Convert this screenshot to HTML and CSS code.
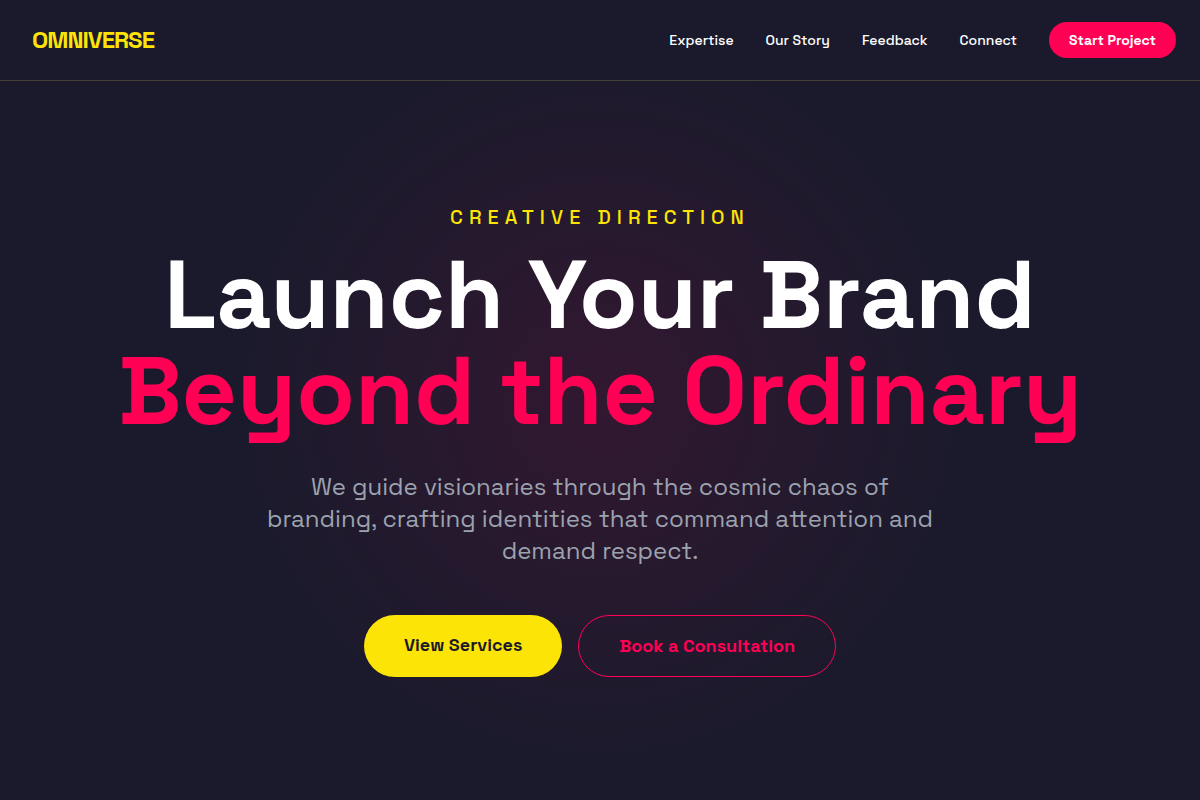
FILE: index.html
```html
<!DOCTYPE html>
<html lang="en">
<head>
    <meta charset="UTF-8">
    <meta name="viewport" content="width=device-width, initial-scale=1.0">
    <title>Omniverse</title>
    <link rel="stylesheet" href="styles.css">
</head>
<body>
    <header class="site-header">
        <a href="#home" class="logo">OMNIVERSE</a>
        <nav class="site-nav">
            <a href="#expertise">Expertise</a>
            <a href="#story">Our Story</a>
            <a href="#feedback">Feedback</a>
            <a href="#connect">Connect</a>
            <button type="button" class="nav-button">Start Project</button>
        </nav>
    </header>
    <main class="hero" id="home">
        <p class="eyebrow">CREATIVE DIRECTION</p>
        <h1>Launch Your Brand <span class="accent">Beyond the Ordinary</span></h1>
        <p class="intro">We guide visionaries through the cosmic chaos of branding, crafting identities that command attention and demand respect.</p>
        <div class="actions">
            <button type="button" class="button button-primary">View Services</button>
            <button type="button" class="button button-outline">Book a Consultation</button>
        </div>
    </main>
</body>
</html>
```
FILE: styles.css
```css
* {
    margin: 0;
    padding: 0;
    box-sizing: border-box;
}

body {
    display: flex;
    flex-direction: column;
    min-height: 100vh;
    background: #1b1a2c radial-gradient(circle 360px at center, rgba(255, 0, 85, 0.1), transparent);
    color: #fff;
    font-family: 'Space Grotesk', Inter, sans-serif;
}

a {
    color: inherit;
    text-decoration: none;
}

button {
    border: none;
    border-radius: 32px;
    font-family: inherit;
    font-weight: 700;
    cursor: pointer;
}

.site-header {
    display: flex;
    align-items: center;
    justify-content: space-between;
    min-height: 81px;
    padding: 0 24px 0 32px;
    background: #1b1a2c;
    border-bottom: 1px solid #454037;
}

.logo {
    color: #fde407;
    font-size: 24px;
    font-weight: 700;
    line-height: 32px;
    letter-spacing: -1px;
}

.site-nav {
    display: flex;
    align-items: center;
    gap: 32px;
    font-size: 14px;
    font-weight: 500;
    line-height: 20px;
}

.nav-button {
    padding: 8px 20px;
    background: #ff0055;
    color: #fff;
    font-size: 14px;
    line-height: 20px;
}

.hero {
    flex: 1;
    display: flex;
    flex-direction: column;
    align-items: center;
    justify-content: center;
    padding: 48px 24px 50px;
    text-align: center;
}

.eyebrow {
    margin-bottom: 16px;
    color: #fde407;
    font-size: 20px;
    font-weight: 500;
    line-height: 28px;
    letter-spacing: 6px;
}

h1 {
    font-size: 96px;
    font-weight: 700;
    line-height: 96px;
}

.accent {
    display: block;
    color: #ff0055;
}

.intro {
    max-width: 672px;
    margin: 32px 0 48px;
    color: #9ca3af;
    font-size: 24px;
    line-height: 32px;
}

.actions {
    display: flex;
    flex-wrap: wrap;
    justify-content: center;
    gap: 16px;
}

.button {
    padding: 16px 40px;
    font-size: 18px;
    line-height: 28px;
}

.button-primary {
    padding-bottom: 18px;
    background: #fde407;
    color: #1b1a2c;
}

.button-outline {
    border: 1px solid #ff0055;
    background: transparent;
    color: #ff0055;
}
```
